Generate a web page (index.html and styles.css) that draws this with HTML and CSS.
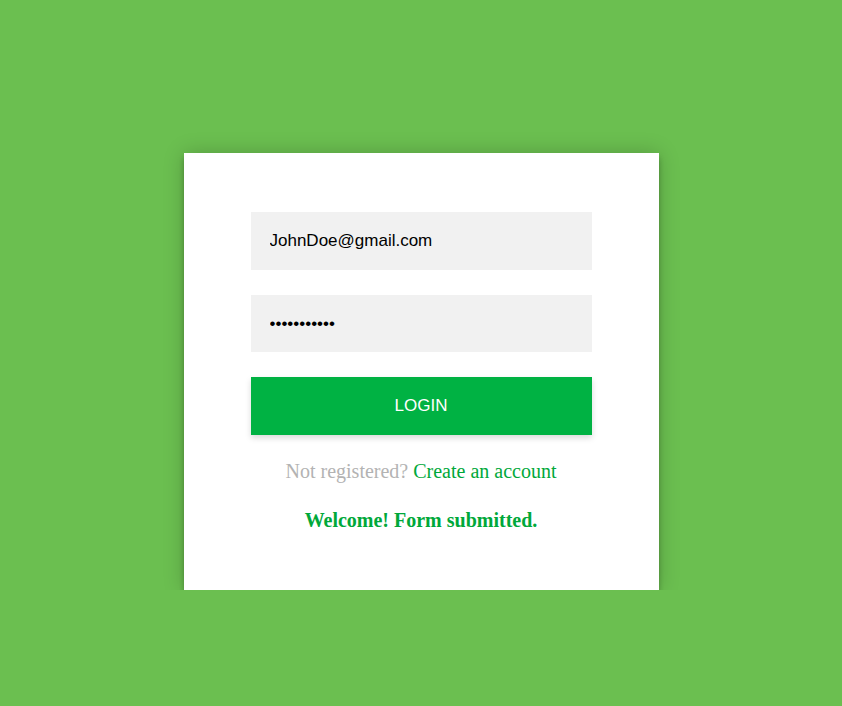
FILE: index.html
```html
<!DOCTYPE html>
<html>
<head>
<meta charset="utf-8">
<link rel="stylesheet" href="styles.css">
</head>
<body>
<div class="page">
  <form class="card">
    <input class="field" type="text" value="JohnDoe@gmail.com">
    <input class="field field-pass" type="password" value="12345678901">
    <button class="btn" type="button">LOGIN</button>
    <p class="message">Not registered? <a href="#">Create an account</a></p>
    <p class="welcome">Welcome! Form submitted.</p>
  </form>
</div>
</body>
</html>
```
FILE: styles.css
```css
html, body {
  margin: 0;
  padding: 0;
  background: #6bbf50;
}
.page {
  display: flex;
  justify-content: center;
  padding-top: 153px;
}
.card {
  width: 475px;
  box-sizing: border-box;
  background: #fff;
  padding: 59px 67px 58px 67px;
  box-shadow: 0 0 20px 0 rgba(0,0,0,0.2), 0 5px 5px 0 rgba(0,0,0,0.24);
  text-align: center;
  display: flex;
  flex-direction: column;
}
.field {
  display: block;
  width: 100%;
  box-sizing: border-box;
  height: 58px;
  margin: 0 0 25px 0;
  padding: 0 19px;
  border: 0;
  outline: 0;
  background: #f1f1f1;
  font-family: "Liberation Sans", Arial, sans-serif;
  font-size: 17px;
  color: #000;
}
.field-pass {
  height: 57px;
}
.btn {
  display: block;
  width: 100%;
  height: 58px;
  border: 0;
  background: #00b243;
  color: #fff;
  font-family: "Liberation Sans", Arial, sans-serif;
  font-size: 17px;
  box-shadow: 0 3px 6px rgba(0,0,0,0.15);
  cursor: pointer;
}
.message {
  margin: 25px 0 0 0;
  font-family: "Liberation Serif", "Times New Roman", serif;
  font-size: 20px;
  line-height: 23px;
  color: #b3b3b3;
}
.message a {
  color: #00a83a;
  text-decoration: none;
}
.welcome {
  margin: 26px 0 0 0;
  font-family: "Liberation Serif", "Times New Roman", serif;
  font-size: 20px;
  line-height: 23px;
  font-weight: bold;
  color: #00a83a;
}
```
